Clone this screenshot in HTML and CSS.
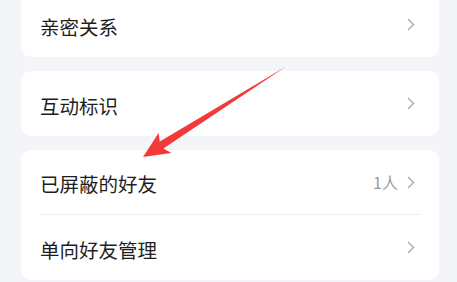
FILE: index.html
```html
<!DOCTYPE html>
<html lang="zh">
<head>
<meta charset="utf-8">
<link rel="stylesheet" href="styles.css">
</head>
<body>
<div class="list">
  <div class="card">
    <div class="row"><span class="label">亲密关系</span><span class="right"><svg class="chev" viewBox="0 0 8 13"><path d="M1 1 L6.5 6.5 L1 12" /></svg></span></div>
  </div>
  <div class="card">
    <div class="row"><span class="label">互动标识</span><span class="right"><svg class="chev" viewBox="0 0 8 13"><path d="M1 1 L6.5 6.5 L1 12" /></svg></span></div>
  </div>
  <div class="card">
    <div class="row divided"><span class="label">已屏蔽的好友</span><span class="right"><span class="value">1人</span><svg class="chev" viewBox="0 0 8 13"><path d="M1 1 L6.5 6.5 L1 12" /></svg></span></div>
    <div class="row"><span class="label">单向好友管理</span><span class="right"><svg class="chev" viewBox="0 0 8 13"><path d="M1 1 L6.5 6.5 L1 12" /></svg></span></div>
  </div>
</div>
<svg class="arrow" width="457" height="282" viewBox="0 0 457 282">
  <polygon points="143,157 158.6,132.9 159.8,141.6 286,66.5 163.4,148.6 171.4,153.1" fill="#f23a3a"/>
</svg>
</body>
</html>
```

FILE: styles.css
```css
html, body {
  margin: 0;
  padding: 0;
}
body {
  background: #f4f5f8;
  width: 457px;
  height: 282px;
  overflow: hidden;
  position: relative;
  font-family: "Noto Sans CJK SC", "Noto Sans", sans-serif;
}
.list {
  display: flex;
  flex-direction: column;
  gap: 14px;
  margin-top: -8px;
  padding-left: 21px;
  width: 418px;
}
.card {
  background: #ffffff;
  border-radius: 10px;
  padding-left: 19px;
}
.row {
  height: 65px;
  display: flex;
  align-items: center;
  justify-content: space-between;
  padding-right: 19px;
  box-sizing: border-box;
}
.card .row:first-child { height: 65px; }
.divided {
  border-bottom: 1px solid #eeeef0;
  margin-right: 19px;
  padding-right: 0;
  height: 65px;
}
.label {
  font-size: 19.5px;
  color: #1e1e1e;
  padding-top: 3px;
}
.right {
  display: flex;
  align-items: center;
  gap: 9px;
  padding-right: 5px;
}
.divided .right { padding-right: 5px; }
.value {
  font-size: 16px;
  color: #9a9a9a;
}
.chev {
  width: 8px;
  height: 13px;
  fill: none;
  stroke: #b3b3b3;
  stroke-width: 1.6;
}
.arrow {
  position: absolute;
  left: 0;
  top: 0;
}
```
